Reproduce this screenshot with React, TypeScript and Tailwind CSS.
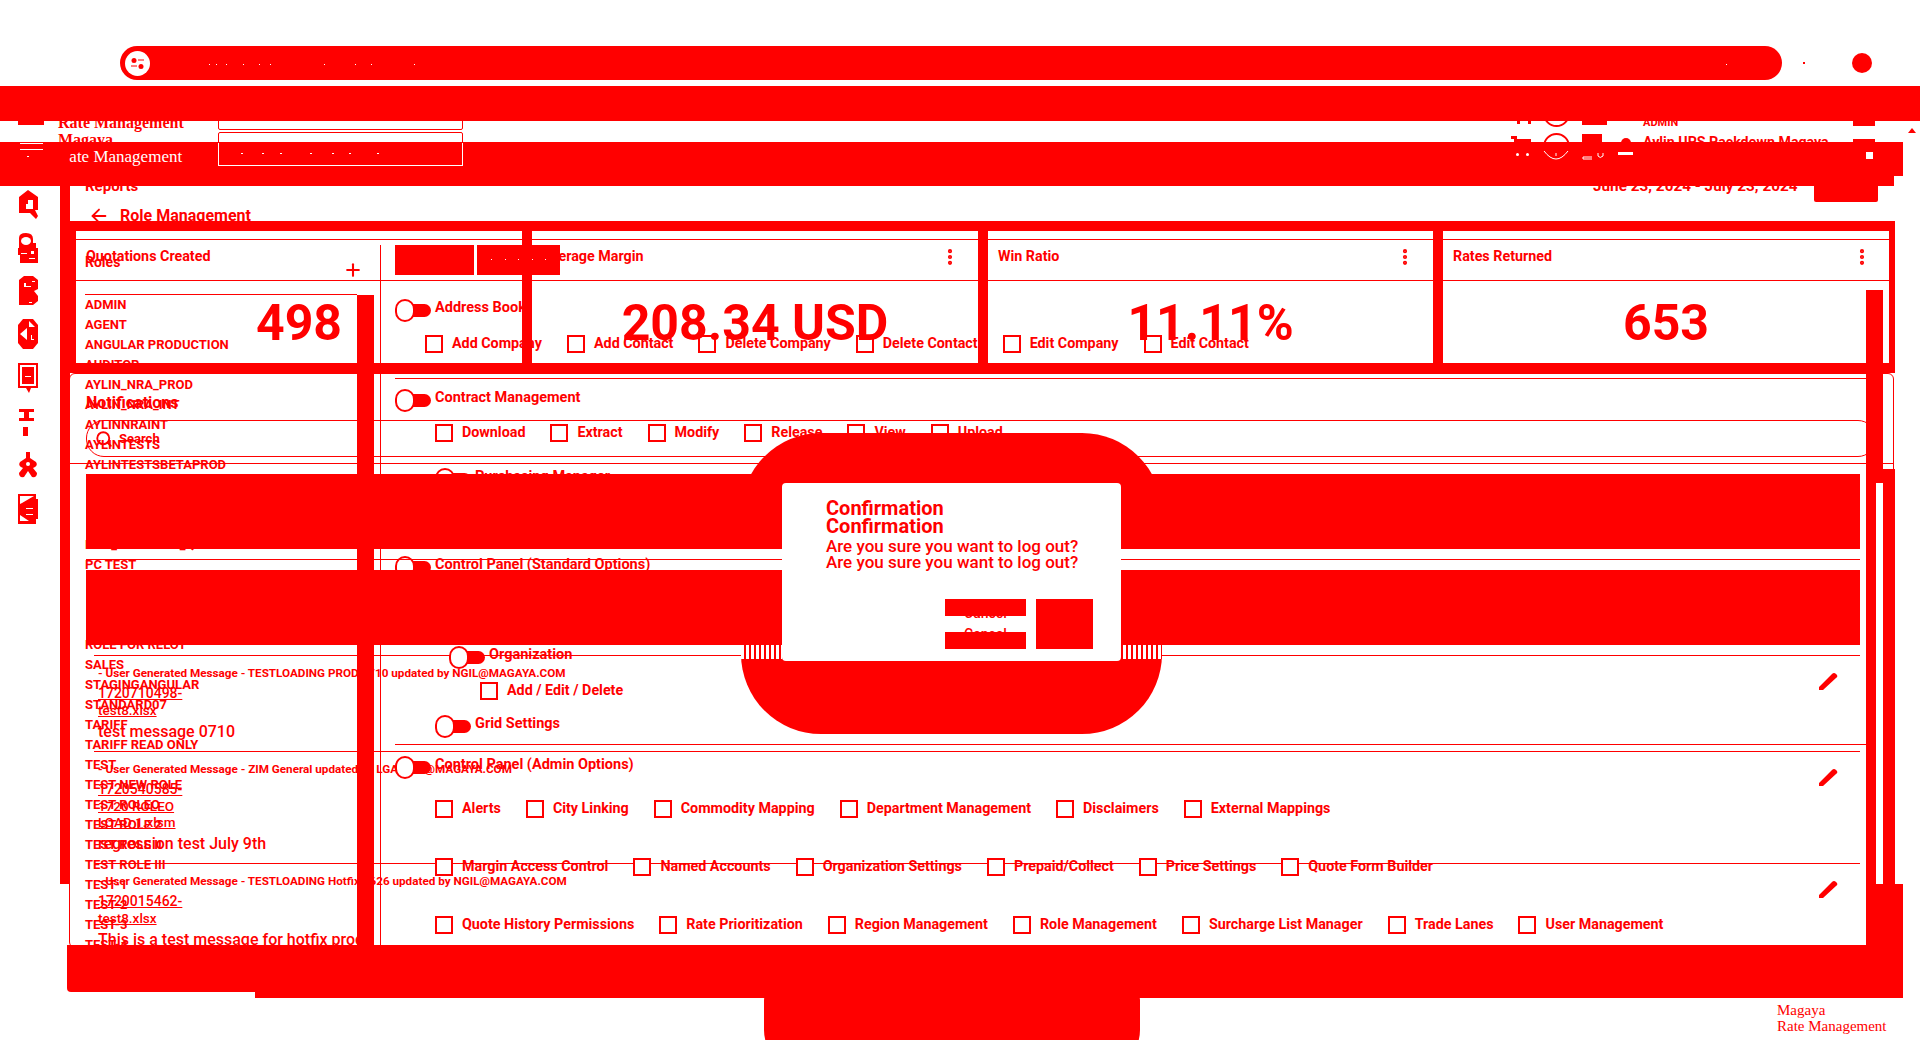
import React from 'react';
import { MoreVertical, Plus, Search, ArrowLeft } from 'lucide-react';

const ROLES = [
  'ADMIN', 'AGENT', 'ANGULAR PRODUCTION', 'AUDITOR', 'AYLIN_NRA_PROD', 'AYLIN_NRA_INT',
  'AYLINNRAINT', 'AYLINTESTS', 'AYLINTESTSBETAPROD', '', '', '', 'NRA_MANAGER_QA',
  'PC TEST', '', '', '', 'ROLE FOR RELOT', 'SALES', 'STAGINGANGULAR', 'STANDARD07',
  'TARIFF', 'TARIFF READ ONLY', 'TEST', 'TEST NEW ROLE', 'TEST ROLEO', 'TEST ROLE 2',
  'TEST ROLE II', 'TEST ROLE III', 'TEST-1', 'TEST-2', 'TEST-3', 'TEST-4',
];

const STATS = [
  { title: 'Quotations Created', value: '498', menu: false },
  { title: 'Average Margin', value: '208.34 USD', menu: true },
  { title: 'Win Ratio', value: '11.11%', menu: true },
  { title: 'Rates Returned', value: '653', menu: true },
];

const MESSAGES = [
  {
    head: '- User Generated Message - TESTLOADING PROD 0710 updated by NGIL@MAGAYA.COM',
    links: ['1720710498-', 'test8.xlsx'],
    body: 'test message 0710',
    height: 'h-[96px]',
  },
  {
    head: '- User Generated Message - ZIM General updated by LGARCIA@MAGAYA.COM',
    links: ['1720540585-', '1720 ROLEO', 'LOAD 1.xlsm'],
    body: 'regression test July 9th',
    height: 'h-[112px]',
  },
  {
    head: '- User Generated Message - TESTLOADING Hotfix 0626 updated by NGIL@MAGAYA.COM',
    links: ['1720015462-', 'test8.xlsx'],
    body: 'This is a test message for hotfix prod',
    height: 'h-[82px]',
  },
];

const PILL_DOTS = [209, 216, 226, 243, 259, 270, 324, 355, 371, 414, 1726];
const INPUT_DOTS = [241, 262, 280, 310, 332, 349, 377];

const Toggle = ({ label, className }: { label: string; className: string }) => (
  <div className={`flex items-center h-[24px] ${className}`}>
    <div className="relative w-[20px] h-[23px] rounded-full border-2 border-[#ff0000] bg-white" />
    <div className="-ml-[3px] w-[19px] h-[13px] rounded-r-full bg-[#ff0000]" />
    <span className="ml-[4px] mb-[4px] text-[14.5px] font-bold whitespace-nowrap">{label}</span>
  </div>
);

const Check = ({ label }: { label: string }) => (
  <div className="flex items-center gap-[9px] h-[18px]">
    <div className="w-[18px] h-[18px] border-2 border-[#ff0000] bg-white" />
    <span className="mb-[2px] text-[14.3px] leading-[18px] font-bold whitespace-nowrap">{label}</span>
  </div>
);

const CheckRow = ({ items, className }: { items: string[]; className: string }) => (
  <div className={`flex gap-[25px] ${className}`}>
    {items.map((item) => (
      <Check key={item} label={item} />
    ))}
  </div>
);

const Permissions = () => (
  <div className="absolute left-[395px] top-[298px] w-[1471px] flex flex-col">
    <Toggle label="Address Book" className="" />
    <CheckRow
      className="mt-[13px] pl-[30px]"
      items={['Add Company', 'Add Contact', 'Delete Company', 'Delete Contact', 'Edit Company', 'Edit Contact']}
    />
    <div className="mt-[25px] h-px bg-[#ff0000]" />
    <Toggle label="Contract Management" className="mt-[9px]" />
    <CheckRow
      className="mt-[12px] pl-[40px]"
      items={['Download', 'Extract', 'Modify', 'Release', 'View', 'Upload']}
    />
    <Toggle label="Purchasing Manager" className="mt-[25px] ml-[40px]" />
    <Toggle label="Control Panel (Standard Options)" className="mt-[64px]" />
    <Toggle label="Organization" className="mt-[66px] ml-[54px]" />
    <CheckRow className="mt-[13px] pl-[85px]" items={['Add / Edit / Delete']} />
    <Toggle label="Grid Settings" className="mt-[14px] ml-[40px]" />
    <div className="mt-[6px] h-px bg-[#ff0000]" />
    <Toggle label="Control Panel (Admin Options)" className="mt-[10px]" />
    <CheckRow
      className="mt-[21px] pl-[40px]"
      items={['Alerts', 'City Linking', 'Commodity Mapping', 'Department Management', 'Disclaimers', 'External Mappings']}
    />
    <CheckRow
      className="mt-[40px] pl-[40px]"
      items={['Margin Access Control', 'Named Accounts', 'Organization Settings', 'Prepaid/Collect', 'Price Settings', 'Quote Form Builder']}
    />
    <CheckRow
      className="mt-[40px] pl-[40px]"
      items={['Quote History Permissions', 'Rate Prioritization', 'Region Management', 'Role Management', 'Surcharge List Manager', 'Trade Lanes', 'User Management']}
    />
  </div>
);

const Pencil = () => (
  <svg width="20" height="18" viewBox="0 0 20 18" className="shrink-0 mt-[17px] mr-[22px]">
    <path d="M1 14 L14 1 Q16 -1 18 1 L19 2 Q20 4 18 5 L5 17 L1 17Z" fill="#ff0000" />
  </svg>
);

const Notifications = () => (
  <div className="absolute left-[69px] top-[373px] w-[1825px] h-[575px] border border-[#ff0000] rounded-[6px] flex flex-col">
    <div className="h-[90px] border-b border-[#ff0000]">
      <h2 className="ml-[16px] mt-[19px] text-[16px] leading-[20px] font-bold">Notifications</h2>
      <div className="ml-[16px] mt-[7px] w-[1790px] h-[37px] border border-[#ff0000] rounded-[18px] flex items-center gap-[6px] pl-[8px]">
        <Search size={18} strokeWidth={2.5} />
        <span className="text-[13px] font-bold">Search</span>
      </div>
    </div>
    <div className="ml-[24px] mt-[191px] w-[1766px] flex flex-col">
      {MESSAGES.map((m) => (
        <div key={m.head} className={`flex justify-between border-t border-[#ff0000] ${m.height}`}>
          <div className="flex flex-col pl-[4px]">
            <div className="mt-[9px] text-[11.7px] leading-[16px] font-bold whitespace-nowrap">{m.head}</div>
            <div className="mt-[3px] flex flex-col">
              {m.links.map((link, i) => (
                <a key={link} className={`underline w-fit font-medium ${i === 0 ? 'text-[14px] leading-[18px]' : 'text-[13.5px] leading-[16px]'}`}>
                  {link}
                </a>
              ))}
            </div>
            <div className="mt-[4px] text-[16px] leading-[20px] font-medium whitespace-nowrap">{m.body}</div>
          </div>
          <Pencil />
        </div>
      ))}
    </div>
  </div>
);

const RolesPanel = () => (
  <div className="absolute left-[85px] top-[254px] w-[272px] flex flex-col">
    <div className="flex items-start justify-between h-[40px]">
      <span className="text-[14px] font-bold leading-[16px]">Roles</span>
      <Plus size={20} strokeWidth={2.5} className="mt-[6px] -mr-[6px]" />
    </div>
    <div className="border-t border-[#ff0000]">
      {ROLES.map((role, i) => (
        <div key={i} className="h-[20px] text-[13px] leading-[20px] font-bold whitespace-nowrap">
          {role}
        </div>
      ))}
    </div>
  </div>
);

const StatFrame = () => (
  <div className="absolute left-[60px] top-[221px] w-[1835px] h-[152px] border-solid border-[#ff0000] border-t-[10px] border-b-[10px] border-l-[16px] border-r-[6px] grid grid-cols-[456px_456px_455px_446px]">
    {STATS.map((s, i) => (
      <div key={s.title} className={`flex flex-col ${i < 3 ? 'border-r-[10px] border-[#ff0000]' : ''}`}>
        <div className={`mt-[8px] h-[42px] border-t border-b border-[#ff0000] flex items-center justify-between pl-[10px] pb-[7px] ${i === 3 ? 'pr-[17px]' : 'pr-[18px]'}`}>
          <span className="text-[14.3px] font-bold">{s.title}</span>
          {s.menu && <MoreVertical size={20} strokeWidth={3} />}
        </div>
        <div className="flex-1 flex items-center justify-center pt-[2px] text-[50px] leading-none font-bold whitespace-nowrap">
          {s.value}
        </div>
      </div>
    ))}
  </div>
);

// sidebar icons, the shapes are blobby on purpose
const SideIcons = () => (
  <div className="absolute left-[18px] top-[190px] w-[20px] flex flex-col gap-[14px]">
    <svg width="20" height="29" viewBox="0 0 20 29">
      <path d="M10 0 L20 7 V20 H17 L20 26 L18 29 L12 23 H1 V7Z" fill="#ff0000" />
      <path d="M8 14 h2 v-4 h5 v9 h-7z" fill="#fff" />
    </svg>
    <svg width="20" height="30" viewBox="0 0 20 30">
      <path d="M1 5 Q1 0 8 0 Q15 0 15 6 V10 H18 V15 H20 V30 H2 V22 H0 V15 H1Z" fill="#ff0000" />
      <ellipse cx="8" cy="8" rx="5" ry="4" fill="#fff" />
      <path d="M3 20 h6 v1 h-6z M11 25 h6 v1 h-6z" fill="#fff" />
      <rect x="13" y="18" width="3" height="3" fill="#fff" />
    </svg>
    <svg width="20" height="29" viewBox="0 0 20 29" className="-mt-[1px]">
      <path d="M1 4 L6 0 H15 L20 4 V13 L16 15 L20 20 V25 L15 29 H1Z" fill="#ff0000" />
      <path d="M6 7 h2 v3 h5 v1 h-7z M14 5 h3 v1 h-3z M11 26 h3 v1 h-3z" fill="#fff" />
    </svg>
    <svg width="20" height="30" viewBox="0 0 20 30">
      <path d="M5 0 H15 L20 6 V24 L15 30 H5 L0 24 V6Z" fill="#ff0000" />
      <path d="M11 2 L17 8 H11Z M9 9 V21 L2 15Z M13 16 v5 h3 v-1 h-2 v-4z" fill="#fff" />
    </svg>
    <svg width="20" height="30" viewBox="0 0 20 30">
      <path d="M0 0 H20 V25 H13 L11 30 L8 25 H0Z" fill="#ff0000" />
      <path d="M2 2 H18 V23 H2Z" fill="#fff" />
      <path d="M4 4 H16 V21 H4Z" fill="#ff0000" />
      <path d="M7 13 h6 v1 h-6z" fill="#fff" />
    </svg>
    <svg width="20" height="27" viewBox="0 0 20 27" className="mt-[2px]">
      <path d="M1 0 H16 V3 H11 V9 H16 V12 H1 V9 H6 V3 H1Z" fill="#ff0000" />
      <rect x="5" y="18" width="5" height="9" fill="#ff0000" />
    </svg>
    <svg width="20" height="26" viewBox="0 0 20 26" className="mt-[2px]">
      <path d="M8 0 H12 V6 L18 10 Q20 13 17 15 L15 16 L19 21 Q19 26 14 25 L10 19 L6 25 Q1 26 1 21 L5 16 L3 15 Q0 13 2 10 L8 6Z" fill="#ff0000" />
      <circle cx="10" cy="12" r="2" fill="#fff" />
    </svg>
    <svg width="20" height="30" viewBox="0 0 20 30" className="mt-[2px]">
      <path d="M0 0 H18 V5 H20 V25 H18 V30 H0 Z" fill="#ff0000" />
      <path d="M2 2 H16 L4 9 L2 10Z M2 21 L11 27 H2Z M8 14 h7 v1 h-7z M8 20 h7 v1 h-7z" fill="#fff" />
    </svg>
  </div>
);

const HeaderGhost = () => (
  <>
    {/* first copy of the top bar, mostly behind the red band */}
    <span className="absolute left-[58px] top-[113px] text-[16px] leading-[20px] font-bold [font-family:'Liberation_Serif',serif]">
      Rate Management
    </span>
    <div className="absolute left-[18px] top-[118px] w-[26px] h-[7px] bg-[#ff0000]" />
    <div className="absolute left-[218px] top-[100px] w-[245px] h-[30px] border border-[#ff0000] rounded-[2px]" />
    <svg width="24" height="10" viewBox="0 0 24 10" className="absolute left-[1515px] top-[118px]">
      <path d="M2 0 v6 h3 v-6z M13 0 v6 h3 v-6z" fill="#ff0000" />
    </svg>
    <div className="absolute left-[1543px] top-[100px] w-[27px] h-[27px] border-2 border-[#ff0000] rounded-full" />
    <div className="absolute left-[1582px] top-[118px] w-[25px] h-[7px] bg-[#ff0000]" />
    <span className="absolute left-[1643px] top-[115px] text-[11px] leading-[16px] font-bold">ADMIN</span>
    <div className="absolute left-[1853px] top-[118px] w-[22px] h-[8px] bg-[#ff0000]" />

    {/* second copy, only its upper edge sticks out */}
    <span className="absolute left-[58px] top-[130px] text-[16px] leading-[20px] font-bold [font-family:'Liberation_Serif',serif]">
      Magaya
    </span>
    <div className="absolute left-[218px] top-[132px] w-[245px] h-[20px] border border-[#ff0000] rounded-[2px]" />
    <svg width="24" height="8" viewBox="0 0 24 8" className="absolute left-[1511px] top-[136px]">
      <path d="M0 0 H6 V3 H20 V8 H3 V3 H0Z" fill="#ff0000" />
    </svg>
    <div className="absolute left-[1543px] top-[133px] w-[27px] h-[27px] border-2 border-[#ff0000] rounded-full" />
    <div className="absolute left-[1582px] top-[134px] w-[20px] h-[9px] bg-[#ff0000]" />
    <div className="absolute left-[1621px] top-[138px] w-[10px] h-[10px] rounded-full bg-[#ff0000]" />
    <span className="absolute left-[1643px] top-[133px] text-[14.2px] leading-[18px] font-bold whitespace-nowrap">
      Aylin  UPS Packdown Magaya
    </span>
    <div className="absolute left-[1853px] top-[139px] w-[22px] h-[6px] bg-[#ff0000]" />
    <div className="absolute left-[1908px] top-[128px] w-0 h-0 border-x-[4px] border-x-transparent border-b-[5px] border-b-[#ff0000]" />
  </>
);

const PageTitle = () => (
  <>
    <span className="absolute left-[85px] top-[177px] text-[15px] leading-[18px] font-bold">Reports</span>
    <span className="absolute left-[1593px] top-[177px] text-[15.3px] leading-[18px] font-bold whitespace-nowrap">
      June 23, 2024 - July 23, 2024
    </span>
    <div className="absolute left-[1814px] top-[170px] w-[64px] h-[32px] bg-[#ff0000] rounded-[2px]" />
    <div className="absolute left-[88px] top-[205px] flex items-center gap-[10px]">
      <ArrowLeft size={22} strokeWidth={2} />
      <span className="text-[16px] leading-[22px] font-bold whitespace-nowrap">Role Management</span>
    </div>
  </>
);

const Bars = () => (
  <>
    <div className="absolute left-[1866px] top-[290px] w-[17px] h-[193px] bg-[#ff0000]" />
    <div className="absolute left-[1866px] top-[483px] w-[10px] h-[462px] bg-[#ff0000]" />
    <div className="absolute left-[1883px] top-[469px] w-[12px] h-[415px] bg-[#ff0000]" />
    <div className="absolute left-[1876px] top-[884px] w-[27px] h-[61px] bg-[#ff0000]" />
    <div className="absolute left-[60px] top-[180px] w-[10px] h-[704px] bg-[#ff0000]" />
    <div className="absolute left-[357px] top-[295px] w-[17px] h-[650px] bg-[#ff0000]" />
    <div className="absolute left-[380px] top-[245px] w-px h-[700px] bg-[#ff0000]" />
    <div className="absolute left-[86px] top-[474px] w-[1774px] h-[75px] bg-[#ff0000]" />
    <div className="absolute left-[86px] top-[570px] w-[1774px] h-[75px] bg-[#ff0000]" />
    <div className="absolute left-[395px] top-[245px] h-[30px] flex gap-[3px]">
      <div className="w-[79px] bg-[#ff0000]" />
      <div className="relative w-[83px] bg-[#ff0000]">
        <div className="absolute inset-x-[14px] top-[14px] flex justify-between">
          <i className="w-px h-px bg-white" />
          <i className="w-px h-px bg-white" />
          <i className="w-px h-px bg-white" />
          <i className="w-px h-px bg-white" />
          <i className="w-px h-px bg-white" />
        </div>
      </div>
    </div>
  </>
);

const TopBands = () => (
  <>
    <div className="absolute left-[120px] top-[46px] w-[1662px] h-[34px] rounded-full bg-[#ff0000] flex items-center pl-[5px]">
      <div className="w-[25px] h-[25px] rounded-full bg-white flex items-center justify-center">
        <svg width="15" height="15" viewBox="0 0 15 15">
          <circle cx="4" cy="4.5" r="2.5" fill="#ff0000" />
          <circle cx="11" cy="10.5" r="2.5" fill="#ff0000" />
          <path d="M8 4 h6 M1 10 h6" stroke="#ff0000" strokeWidth="1" />
        </svg>
      </div>
    </div>
    {PILL_DOTS.map((x) => (
      <i key={x} className="absolute top-[64px] w-px h-px bg-white" style={{ left: x }} />
    ))}
    <i className="absolute left-[1803px] top-[62px] w-[2px] h-[2px] bg-[#ff0000]" />
    <div className="absolute left-[1852px] top-[53px] w-[20px] h-[20px] rounded-full bg-[#ff0000]" />
    <div className="absolute left-0 top-[86px] w-full h-[35px] bg-[#ff0000]" />
    <div className="absolute left-0 top-[142px] w-[1903px] h-[34px] bg-[#ff0000]" />
    <div className="absolute left-0 top-[176px] w-[1894px] h-[10px] bg-[#ff0000]" />

    {/* white bits on the band */}
    <div className="absolute left-[20px] top-[143px] w-[23px] h-[7px] border-y border-white" />
    <i className="absolute left-[27px] top-[156px] w-[2px] h-px bg-white" />
    <span className="absolute left-[58px] top-[147px] text-[17px] leading-[20px] text-white [font-family:'Liberation_Serif',serif]">
      <span className="text-[#ff0000]">R</span>ate Management
    </span>
    <div className="absolute left-[218px] top-[143px] w-[245px] h-[23px] border-x border-b border-white" />
    {INPUT_DOTS.map((x) => (
      <i key={x} className="absolute top-[153px] w-[2px] h-px bg-white" style={{ left: x }} />
    ))}
    <i className="absolute left-[1516px] top-[153px] w-[3px] h-[3px] rounded-full bg-white" />
    <i className="absolute left-[1526px] top-[153px] w-[3px] h-[3px] rounded-full bg-white" />
    <svg width="28" height="12" viewBox="0 0 28 12" className="absolute left-[1542px] top-[150px]">
      <path d="M2 1 Q14 17 26 1 M14 3 v3" stroke="#fff" fill="none" />
    </svg>
    <svg width="24" height="8" viewBox="0 0 24 8" className="absolute left-[1582px] top-[152px]">
      <path d="M10 5 H1 V7 H10 M16 1 V4 Q18 7 21 4 V1" stroke="#fff" fill="none" />
    </svg>
    <div className="absolute left-[1618px] top-[152px] w-[15px] h-[3px] bg-white" />
    <div className="absolute left-[1866px] top-[152px] w-[7px] h-[7px] bg-white" />
  </>
);

const BottomBands = () => (
  <>
    <div className="absolute left-[764px] top-[960px] w-[376px] h-[110px] rounded-[40px] bg-[#ff0000]" />
    <div className="absolute left-[67px] top-[945px] w-[1836px] h-[47px] rounded-bl-[4px] bg-[#ff0000]" />
    <div className="absolute left-[255px] top-[990px] w-[1648px] h-[8px] bg-[#ff0000]" />
    <div className="absolute left-[1777px] top-[1002px] text-[15px] leading-[16px] [font-family:'Liberation_Serif',serif]">
      <div>Magaya</div>
      <div>Rate Management</div>
    </div>
  </>
);

const LogoutModal = () => (
  <>
    <div className="absolute left-[741px] top-[433px] w-[421px] h-[301px] rounded-[80px] bg-[#ff0000]" />

    {/* the gap between the two red blocks stays open either side of the dialog */}
    <div className="absolute left-[741px] top-[549px] w-[41px] h-[21px] bg-white" />
    <div className="absolute left-[1121px] top-[549px] w-[41px] h-[21px] bg-white" />
    <div className="absolute left-[86px] top-[559px] w-[1774px] h-px bg-[#ff0000]" />
    <div className="absolute left-[741px] top-[645px] w-[41px] h-[14px] bg-[repeating-linear-gradient(90deg,#ffffff_0,#ffffff_3px,#ff0000_3px,#ff0000_5px)]" />
    <div className="absolute left-[1121px] top-[645px] w-[41px] h-[14px] bg-[repeating-linear-gradient(90deg,#ff0000_0,#ff0000_2px,#ffffff_2px,#ffffff_5px)]" />

    <div className="absolute left-[782px] top-[483px] w-[339px] h-[178px] rounded-[4px] bg-white flex flex-col pl-[44px] pr-[28px] pt-[16px]">
      <h3 className="text-[20px] leading-[18px] font-bold">Confirmation</h3>
      <h3 className="text-[20px] leading-[18px] font-bold">Confirmation</h3>
      <p className="mt-[3px] text-[17px] leading-[16px] font-medium whitespace-nowrap">Are you sure you want to log out?</p>
      <p className="text-[17px] leading-[16px] font-medium whitespace-nowrap">Are you sure you want to log out?</p>
      <div className="mt-[29px] flex justify-end gap-[10px] h-[50px]">
        <div className="w-[81px] flex flex-col text-center text-[14px] font-medium">
          <div className="h-[17px] bg-[#ff0000]" />
          <div className="h-[16px] overflow-hidden flex flex-col justify-between">
            <span className="-mt-[10px] leading-[14px]">Cancel</span>
            <span className="-mb-[9px] leading-[14px]">Cancel</span>
          </div>
          <div className="h-[17px] bg-[#ff0000]" />
        </div>
        <div className="w-[57px] bg-[#ff0000]" />
      </div>
    </div>
  </>
);

const App: React.FC = () => {
  return (
    <div className="relative w-full h-[1040px] overflow-hidden bg-white text-[#ff0000] [font-family:Roboto,sans-serif]">
      <HeaderGhost />
      <PageTitle />
      <SideIcons />
      <Notifications />
      <RolesPanel />
      <Permissions />
      <StatFrame />
      <Bars />
      <TopBands />
      <BottomBands />
      <LogoutModal />
    </div>
  );
};

export default App;
